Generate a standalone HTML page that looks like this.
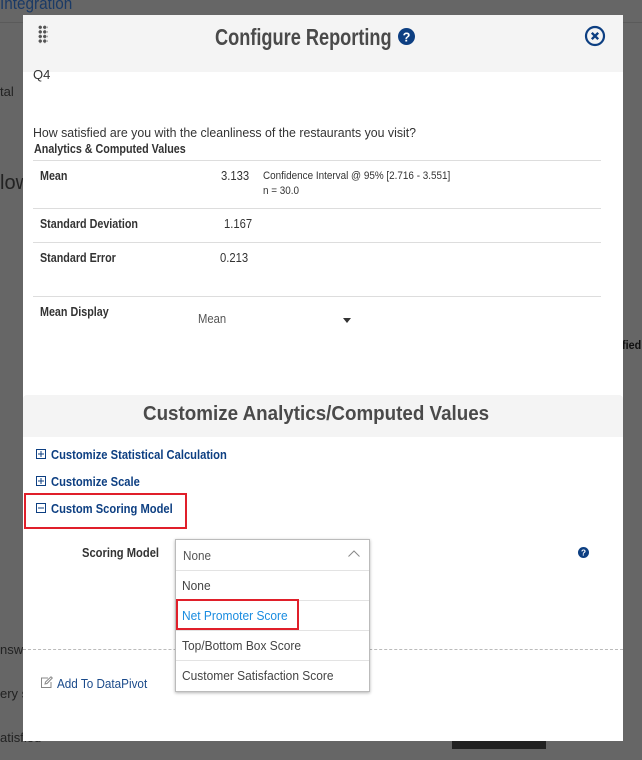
<!DOCTYPE html>
<html><head><meta charset="utf-8"><style>
*{margin:0;padding:0;box-sizing:border-box}
body{width:642px;height:760px;background:#666;position:relative;overflow:hidden;font-family:"Liberation Sans",sans-serif;color:#333}
.a{position:absolute;white-space:nowrap}
.s{transform:scaleX(.9);transform-origin:0 0}
.s8{transform:scaleX(.86);transform-origin:0 0}
.modal{position:absolute;left:23px;top:15px;width:600px;height:726px;background:#fff}
.hdr{position:absolute;left:0;top:0;width:600px;height:57px;background:#f4f4f4}
.b{font-weight:bold}
.ln{position:absolute;left:10px;width:568px;height:1px;background:#ddd}
.blue{color:#0d3f82;font-weight:bold}
.opt{position:absolute;left:0;width:193px;height:30px;border-top:1px solid #e3e3e3;font-size:13px;padding:7px 0 0 6px;color:#444}
.opt span{display:inline-block;transform:scaleX(.92);transform-origin:0 0}
</style></head><body>
<div class="a s" style="left:0;top:-6px;font-size:17px;color:#1a3a66">Integration</div>
<div class="a" style="left:0;top:22px;width:642px;height:1px;background:#5a5a5a"></div>
<div class="a" style="left:0;top:84px;font-size:13px;color:#222">tal</div>
<div class="a" style="left:0;top:172px;font-size:20px;color:#222">low</div>
<div class="a s" style="left:622px;top:338px;font-size:12px;color:#111;font-weight:bold">fied</div>
<div class="a" style="left:0;top:642px;font-size:13px;color:#222">nsw</div>
<div class="a" style="left:0;top:686px;font-size:13px;color:#222">ery s</div>
<div class="a" style="left:0;top:730px;font-size:13px;color:#222">atisfied</div>
<div class="a" style="left:452px;top:741px;width:94px;height:8px;background:#222"></div>
<div class="modal">
 <div class="hdr">
  <div class="a" style="left:15px;top:10px;width:10px;height:19px;background:radial-gradient(circle,#555 1.5px,transparent 1.9px) 0 0/4.5px 4.6px"></div>
  <div class="a b" style="left:192px;top:9px;font-size:23px;color:#4a4a4a;transform:scaleX(.79);transform-origin:0 0">Configure Reporting</div>
  <svg class="a" style="left:375px;top:13px" width="17" height="17" viewBox="0 0 16 16"><circle cx="8" cy="8" r="8" fill="#0d3f82"/><text x="8" y="12.5" text-anchor="middle" font-size="12" font-weight="bold" fill="#fff" font-family="Liberation Sans">?</text></svg>
  <svg class="a" style="left:561px;top:10px" width="22" height="22" viewBox="0 0 22 22"><circle cx="11" cy="11" r="9" fill="none" stroke="#0d3f82" stroke-width="2.2"/><path d="M7.8 7.8L14.2 14.2M14.2 7.8L7.8 14.2" stroke="#0d3f82" stroke-width="2.4"/></svg>
 </div>
 <div class="a" style="left:10px;top:52px;font-size:13px">Q4</div>
 <div class="a s" style="left:10px;top:110px;font-size:13px;transform:scaleX(.95)">How satisfied are you with the cleanliness of the restaurants you visit?</div>
 <div class="a b s8" style="left:11px;top:127px;font-size:12.5px">Analytics &amp; Computed Values</div>
 <div class="ln" style="top:145px"></div>
 <div class="a b s8" style="left:17px;top:154px;font-size:12.5px">Mean</div>
 <div class="a s" style="left:198px;top:154px;font-size:12.5px">3.133</div>
 <div class="a s" style="left:240px;top:155px;font-size:11px">Confidence Interval @ 95% [2.716 - 3.551]</div>
 <div class="a s" style="left:240px;top:170px;font-size:11px">n = 30.0</div>
 <div class="ln" style="top:193px"></div>
 <div class="a b s8" style="left:17px;top:202px;font-size:12.5px">Standard Deviation</div>
 <div class="a s" style="left:201px;top:202px;font-size:12.5px">1.167</div>
 <div class="ln" style="top:227px"></div>
 <div class="a b s8" style="left:17px;top:236px;font-size:12.5px">Standard Error</div>
 <div class="a s" style="left:197px;top:236px;font-size:12.5px">0.213</div>
 <div class="ln" style="top:281px"></div>
 <div class="a b s8" style="left:17px;top:290px;font-size:12.5px">Mean Display</div>
 <div class="a s" style="left:175px;top:297px;font-size:12.5px;color:#555">Mean</div>
 <svg class="a" style="left:320px;top:303px" width="8" height="5"><path d="M0 0H8L4 5Z" fill="#333"/></svg>
 <div class="a" style="left:0;top:380px;width:600px;height:42px;background:#f4f4f4;border-radius:4px 4px 0 0"></div>
 <div class="a" style="left:120px;top:388px;font-size:20px;color:#4a4a4a;font-weight:bold;transform:scaleX(.94);transform-origin:0 0">Customize Analytics/Computed Values</div>
 <svg class="a" style="left:13px;top:434px" width="10" height="10"><rect x=".5" y=".5" width="9" height="9" fill="none" stroke="#0d3f82"/><path d="M2 5H8M5 2V8" stroke="#0d3f82"/></svg>
 <div class="a blue s8" style="left:28px;top:432px;font-size:13px">Customize Statistical Calculation</div>
 <svg class="a" style="left:13px;top:461px" width="10" height="10"><rect x=".5" y=".5" width="9" height="9" fill="none" stroke="#0d3f82"/><path d="M2 5H8M5 2V8" stroke="#0d3f82"/></svg>
 <div class="a blue s8" style="left:28px;top:459px;font-size:13px">Customize Scale</div>
 <div class="a" style="left:1px;top:478px;width:163px;height:36px;border:2px solid #e01f2a"></div>
 <svg class="a" style="left:13px;top:488px" width="10" height="10"><rect x=".5" y=".5" width="9" height="9" fill="none" stroke="#0d3f82"/><path d="M2 5H8" stroke="#0d3f82"/></svg>
 <div class="a blue s8" style="left:28px;top:486px;font-size:13px">Custom Scoring Model</div>
 <div class="a b s8" style="left:59px;top:530px;font-size:13px">Scoring Model</div>
 <svg class="a" style="left:555px;top:532px" width="11" height="11" viewBox="0 0 16 16"><circle cx="8" cy="8" r="8" fill="#0d3f82"/><text x="8" y="12.5" text-anchor="middle" font-size="12" font-weight="bold" fill="#fff" font-family="Liberation Sans">?</text></svg>
 <div class="a" style="left:0;top:634px;width:600px;border-top:1px dashed #bbb"></div>
 <svg class="a" style="left:17px;top:661px" width="13" height="13" viewBox="0 0 13 13"><path d="M8 2H1.5V11.5H11V6" fill="none" stroke="#888"/><path d="M5 8L5.5 6L11 0.8L12.3 2L7 7.5Z" fill="none" stroke="#888"/></svg>
 <div class="a s" style="left:34px;top:661px;font-size:13px;color:#1a4a8a">Add To DataPivot</div>
 <div class="a" style="left:152px;top:524px;width:195px;height:153px;background:#fff;border:1px solid #bbb;box-shadow:0 1px 3px rgba(0,0,0,.3)">
  <div class="a s" style="left:7px;top:8px;font-size:13px;color:#555">None</div>
  <svg class="a" style="left:172px;top:10px" width="12" height="7"><path d="M0.5 6.5L6 1L11.5 6.5" fill="none" stroke="#888"/></svg>
  <div class="opt" style="top:30px"><span>None</span></div>
  <div class="opt" style="top:60px;color:#1a8ce0"><span>Net Promoter Score</span></div>
  <div class="a" style="left:0;top:59px;width:123px;height:31px;border:2px solid #e01f2a"></div>
  <div class="opt" style="top:90px"><span>Top/Bottom Box Score</span></div>
  <div class="opt" style="top:120px"><span>Customer Satisfaction Score</span></div>
 </div>
</div>
</body></html>
